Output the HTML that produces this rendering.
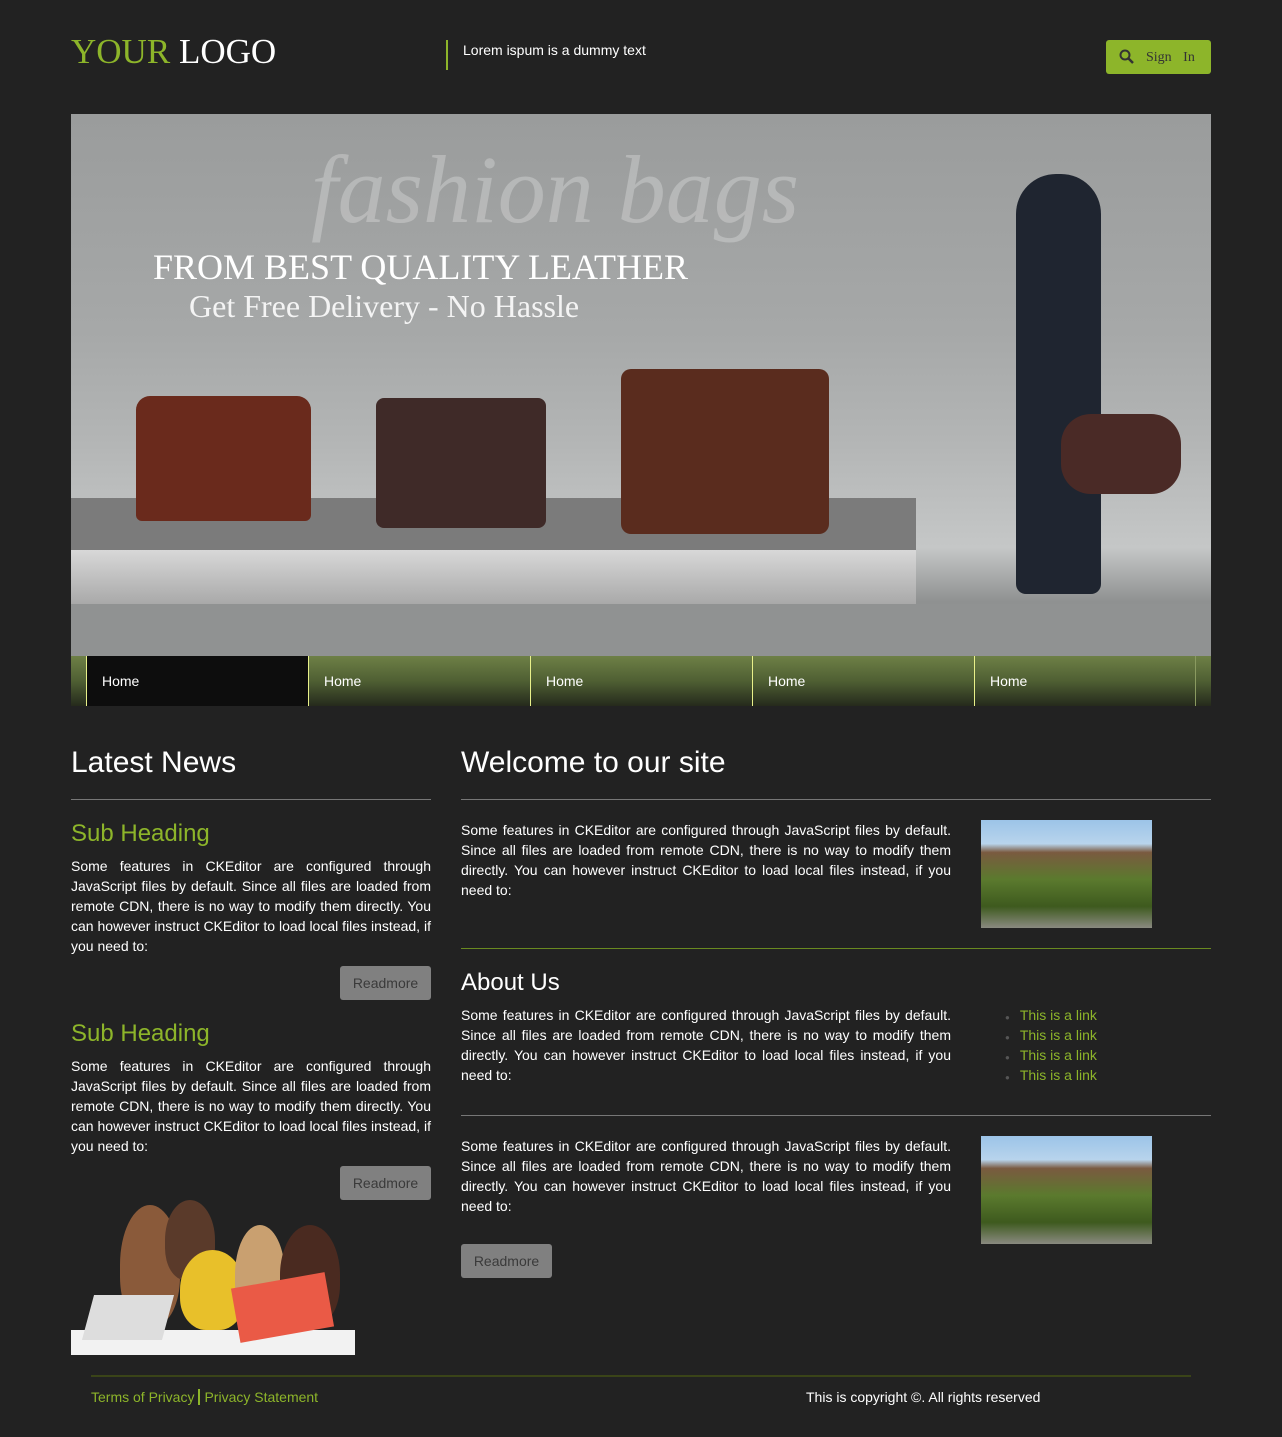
<!DOCTYPE html>
<html><head><meta charset="utf-8"><style>
*{margin:0;padding:0;box-sizing:border-box}
body{width:1282px;height:1437px;background:#222;font-family:"Liberation Sans",Arial,sans-serif;color:#fff;position:relative;overflow:hidden;font-size:14px}
.a{position:absolute}
.logo{left:71px;top:32px;font-family:"Liberation Serif",serif;font-size:35px;letter-spacing:0px}
.logo span{color:#8db52a}
.tag{left:446px;top:40px;height:30px;border-left:2px solid #8db52a;padding-left:15px;font-size:14px;line-height:20px}
.sign{left:1106px;top:40px;width:105px;height:34px;background:#8db52a;border-radius:3px;color:#333;font-family:"Liberation Serif",serif;font-size:14px;line-height:36px;padding-left:40px;word-spacing:8px}
.banner{left:71px;top:114px;width:1140px;height:542px;background:linear-gradient(#9a9c9c,#a6a8a8 40%,#b3b5b5 60%,#c5c7c7 80%,#8f9191 90%,#8f9191);overflow:hidden}
.nav{left:71px;top:656px;width:1140px;height:50px;background:linear-gradient(#6e8046,#4f5f33 50%,#252a1c)}
.nav div{position:absolute;top:0;height:50px;border-left:1px solid #e8f08a;line-height:50px;padding-left:15px;font-size:14px;width:222px}
p.t{font-size:14px;line-height:20px;text-align:justify}
.btn{background:#808080;color:#3a3a3a;border-radius:3px;font-size:14px;text-align:center;line-height:34px;height:34px;width:91px}
.hr{height:1px;background:#777}
.g{color:#8db52a}
.p{position:absolute;border-radius:50% 50% 40% 40%}
</style></head><body>
<div class="a logo"><span>YOUR</span> LOGO</div>
<div class="a tag">Lorem ispum is a dummy text</div>
<div class="a sign">
<svg class="a" style="left:13px;top:9px" width="16" height="16" viewBox="0 0 16 16"><circle cx="6" cy="6" r="4.5" fill="none" stroke="#333" stroke-width="2"/><path d="M9.5 9.5L14 14" stroke="#333" stroke-width="2.5"/></svg>Sign In</div>

<div class="a banner">
<div class="a" style="left:0;top:436px;width:845px;height:54px;background:linear-gradient(#d8d8d8,#a9a9a9)"></div>
<div class="a" style="left:0;top:384px;width:845px;height:52px;background:#7b7b7b"></div>
<div class="a" style="left:0;top:490px;width:1140px;height:52px;background:#909292"></div>
<div class="a" style="left:240px;top:20px;font-family:'Liberation Serif',serif;font-style:italic;font-size:96px;color:rgba(255,255,255,.25)">fashion bags</div>
<div class="a" style="left:82px;top:132px;font-family:'Liberation Serif',serif;font-size:36px;color:#fff">FROM BEST QUALITY LEATHER</div>
<div class="a" style="left:118px;top:174px;font-family:'Liberation Serif',serif;font-size:32px;color:#f4f4f4">Get Free Delivery - No Hassle</div>
<div class="a" style="left:65px;top:282px;width:175px;height:125px;background:#6a2a1c;border-radius:14px 14px 6px 6px"></div>
<div class="a" style="left:305px;top:284px;width:170px;height:130px;background:#3f2a28;border-radius:8px"></div>
<div class="a" style="left:550px;top:255px;width:208px;height:165px;background:#5a2c1e;border-radius:10px"></div>
<div class="a" style="left:945px;top:60px;width:85px;height:420px;background:#1f2530;border-radius:40px 40px 10px 10px"></div>
<div class="a" style="left:990px;top:300px;width:120px;height:80px;background:#4a2a26;border-radius:30px"></div>
</div>

<div class="a nav">
<div style="left:15px;background:#0d0d0d">Home</div>
<div style="left:237px">Home</div>
<div style="left:459px">Home</div>
<div style="left:681px">Home</div>
<div style="left:903px;width:222px;border-right:1px solid #8a9a60">Home</div>
</div>

<div class="a" style="left:71px;top:746px;font-size:30px">Latest News</div>
<div class="a hr" style="left:71px;top:799px;width:360px"></div>
<div class="a g" style="left:71px;top:820px;font-size:24px">Sub Heading</div>
<p class="a t" style="left:71px;top:856px;width:360px">Some features in CKEditor are configured through JavaScript files by default. Since all files are loaded from remote CDN, there is no way to modify them directly. You can however instruct CKEditor to load local files instead, if you need to:</p>
<div class="a btn" style="left:340px;top:966px">Readmore</div>
<div class="a g" style="left:71px;top:1020px;font-size:24px">Sub Heading</div>
<p class="a t" style="left:71px;top:1056px;width:360px">Some features in CKEditor are configured through JavaScript files by default. Since all files are loaded from remote CDN, there is no way to modify them directly. You can however instruct CKEditor to load local files instead, if you need to:</p>
<div class="a btn" style="left:340px;top:1166px">Readmore</div>
<div class="a" style="left:71px;top:1330px;width:284px;height:25px;background:#f2f2f2"></div>
<div class="p" style="left:120px;top:1205px;width:60px;height:120px;background:#8a5a3a"></div>
<div class="p" style="left:165px;top:1200px;width:50px;height:80px;background:#5a3a2a"></div>
<div class="p" style="left:180px;top:1250px;width:65px;height:80px;background:#e8c02a"></div>
<div class="p" style="left:235px;top:1225px;width:50px;height:100px;background:#c9a070"></div>
<div class="p" style="left:280px;top:1225px;width:60px;height:100px;background:#4a2a20"></div>
<div class="a" style="left:88px;top:1295px;width:80px;height:45px;background:#ddd;transform:skew(-15deg)"></div>
<div class="a" style="left:235px;top:1280px;width:95px;height:55px;background:#ea5a46;transform:rotate(-10deg)"></div>

<div class="a" style="left:461px;top:746px;font-size:30px">Welcome to our site</div>
<div class="a hr" style="left:461px;top:799px;width:750px"></div>
<p class="a t" style="left:461px;top:820px;width:490px">Some features in CKEditor are configured through JavaScript files by default. Since all files are loaded from remote CDN, there is no way to modify them directly. You can however instruct CKEditor to load local files instead, if you need to:</p>
<div class="a" style="left:981px;top:820px;width:171px;height:108px;background:linear-gradient(#9cc4e8 0,#b8d4ec 22%,#7a5a40 30%,#5b7a2e 55%,#3e5a1e 80%,#8a8a80)"></div>
<div class="a" style="left:461px;top:948px;width:750px;height:1px;background:#6a8a20"></div>
<div class="a" style="left:461px;top:969px;font-size:24px">About Us</div>
<p class="a t" style="left:461px;top:1005px;width:490px">Some features in CKEditor are configured through JavaScript files by default. Since all files are loaded from remote CDN, there is no way to modify them directly. You can however instruct CKEditor to load local files instead, if you need to:</p>
<div class="a g" style="left:1005px;top:1005px;line-height:20px;font-size:14px">
<div style="height:20px"><span style="color:#555;font-size:8px;margin-right:10px">●</span>This is a link</div>
<div style="height:20px"><span style="color:#555;font-size:8px;margin-right:10px">●</span>This is a link</div>
<div style="height:20px"><span style="color:#555;font-size:8px;margin-right:10px">●</span>This is a link</div>
<div style="height:20px"><span style="color:#555;font-size:8px;margin-right:10px">●</span>This is a link</div></div>
<div class="a hr" style="left:461px;top:1115px;width:750px"></div>
<p class="a t" style="left:461px;top:1136px;width:490px">Some features in CKEditor are configured through JavaScript files by default. Since all files are loaded from remote CDN, there is no way to modify them directly. You can however instruct CKEditor to load local files instead, if you need to:</p>
<div class="a" style="left:981px;top:1136px;width:171px;height:108px;background:linear-gradient(#9cc4e8 0,#b8d4ec 22%,#7a5a40 30%,#5b7a2e 55%,#3e5a1e 80%,#8a8a80)"></div>
<div class="a btn" style="left:461px;top:1244px">Readmore</div>

<div class="a" style="left:91px;top:1375px;width:1100px;height:2px;background:#3a4418"></div>
<div class="a g" style="left:91px;top:1389px">Terms of Privacy<span style="border-left:2px solid #8db52a;margin:0 4px"></span>Privacy Statement</div>
<div class="a" style="left:806px;top:1389px">This is copyright ©. All rights reserved</div>
</body></html>
